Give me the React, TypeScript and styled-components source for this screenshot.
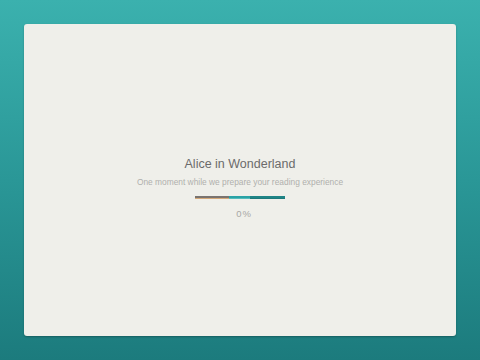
import React from "react";
import styled, { createGlobalStyle } from "styled-components";

const Global = createGlobalStyle`
  html, body { margin: 0; padding: 0; }
  body { font-family: "Liberation Sans", Arial, sans-serif; }
`;

const Page = styled.div`
  width: 480px;
  height: 360px;
  box-sizing: border-box;
  padding: 24px;
  background: linear-gradient(180deg, #3bb1ae 0%, #2a9797 50%, #1c7b7d 100%);
  display: flex;
`;

const Card = styled.div`
  flex: 1;
  background: #efefea;
  border-radius: 3px;
  box-shadow: 0 1px 2px rgba(0, 0, 0, 0.25);
  display: flex;
  flex-direction: column;
  align-items: center;
  justify-content: center;
  padding-top: 16px;
`;

const Title = styled.div`
  font-size: 12.5px;
  color: #6b6b6b;
  line-height: 15px;
`;

const Subtitle = styled.div`
  font-size: 8.4px;
  color: #b0b0ad;
  margin-top: 5px;
  line-height: 10px;
`;

const Track = styled.div`
  width: 90px;
  height: 3px;
  margin-top: 9px;
  display: flex;
`;

const Segment = styled.div<{ $top: string; $bottom: string; $w: number }>`
  width: ${(p) => p.$w}px;
  height: 3px;
  background: linear-gradient(180deg, ${(p) => p.$top} 0 50%, ${(p) => p.$bottom} 50% 100%);
`;

const Percent = styled.div`
  font-size: 9.5px;
  color: #a8a8a5;
  margin-top: 9px;
  margin-left: 8px;
  letter-spacing: 1px;
`;

export default function App() {
  return (
    <>
      <Global />
      <Page>
        <Card>
          <Title>Alice in Wonderland</Title>
          <Subtitle>One moment while we prepare your reading experience</Subtitle>
          <Track>
            <Segment $w={34} $top="#7a7470" $bottom="#d4a878" />
            <Segment $w={21} $top="#2aa3a6" $bottom="#55bcbc" />
            <Segment $w={35} $top="#1f8486" $bottom="#1c7a7c" />
          </Track>
          <Percent>0%</Percent>
        </Card>
      </Page>
    </>
  );
}
